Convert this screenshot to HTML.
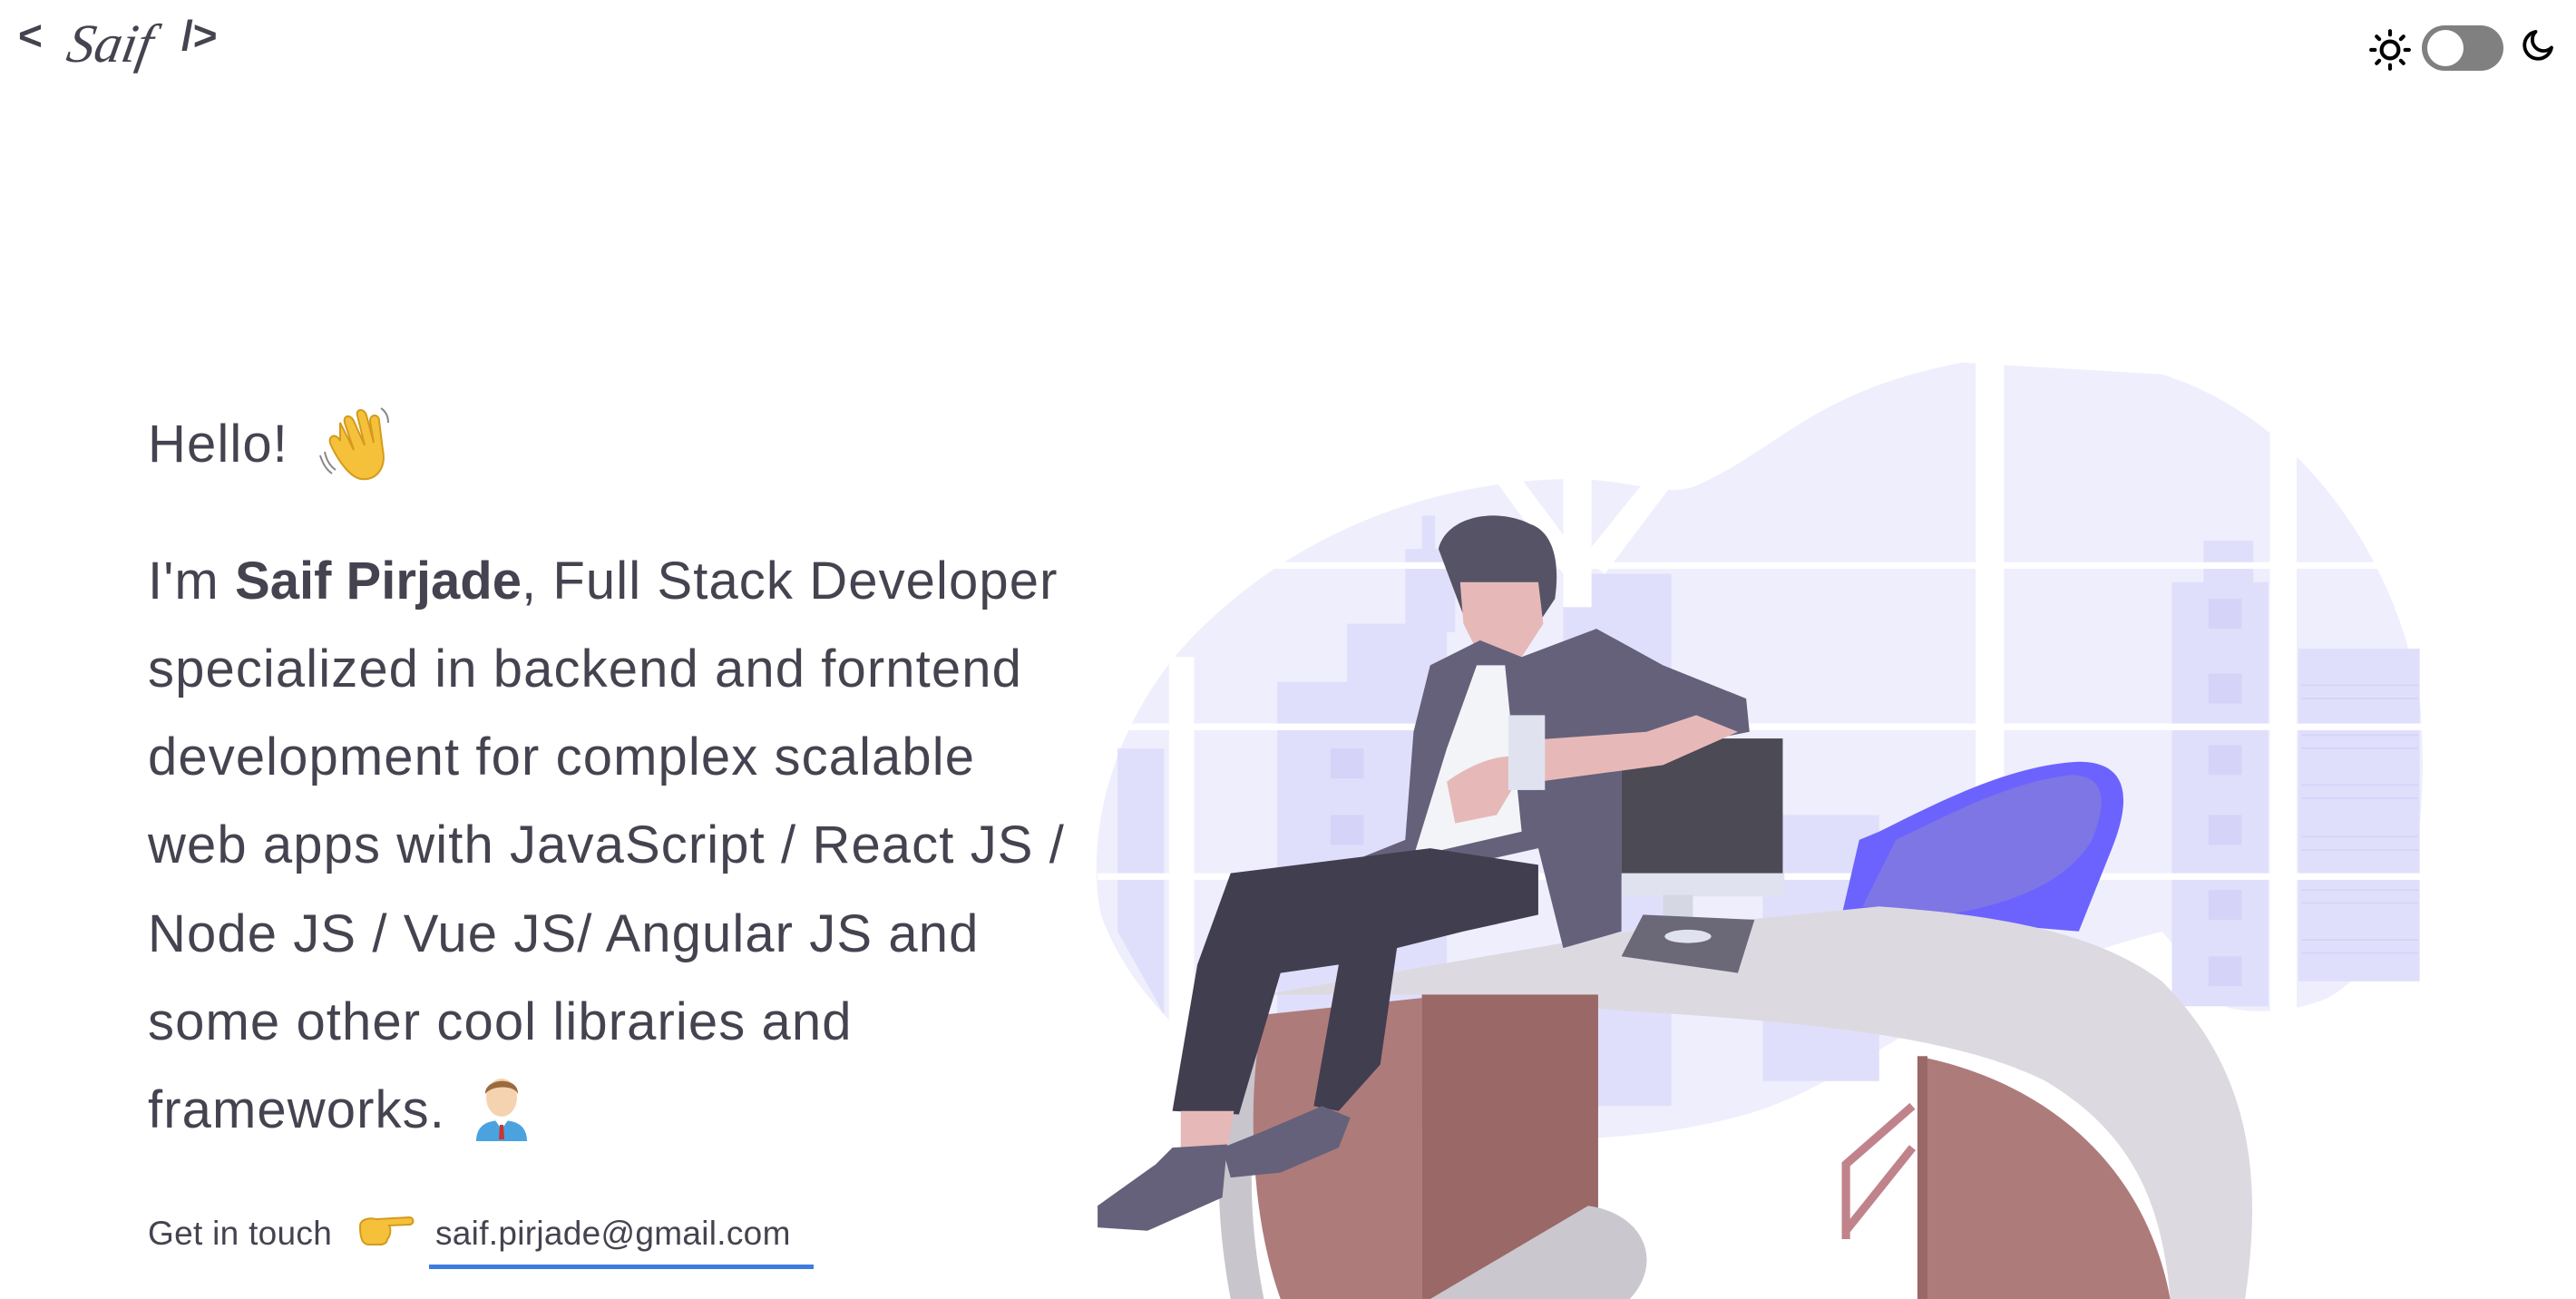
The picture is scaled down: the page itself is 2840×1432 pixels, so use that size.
<!DOCTYPE html>
<html><head><meta charset="utf-8"><style>
html,body{margin:0;padding:0;background:#fff;width:2840px;height:1432px;overflow:hidden;position:relative;font-family:"Liberation Sans",sans-serif;color:#45434f}
.t{position:absolute;left:163px;white-space:nowrap;font-size:58px;line-height:97px;font-weight:300;letter-spacing:1.1px;color:#45434f}
b{font-weight:700;letter-spacing:0px}
svg.ill{position:absolute;left:0;top:0}
</style></head><body>
<svg class="ill" width="2840" height="1432" viewBox="0 0 1549 781">
 <path d="M720 380 C780 320 860 290 940 288 C980 287 1000 300 1020 292 C1070 270 1090 235 1180 218 L1300 225 C1380 250 1440 330 1455 420 C1462 500 1450 570 1400 600 C1380 608 1360 610 1340 606 L1300 560 C1150 600 1120 650 1050 670 C980 690 880 690 800 670 C730 650 680 600 662 550 C652 500 670 430 720 380 Z" fill="#efeefd"/>
 <g fill="#e0dffb">
  <rect x="810" y="375" width="60" height="280"/>
  <rect x="855" y="310" width="8" height="70"/>
  <rect x="845" y="330" width="30" height="50"/>
  <rect x="768" y="410" width="50" height="220"/>
  <rect x="940" y="345" width="65" height="320"/>
  <rect x="1060" y="490" width="70" height="160"/>
  <rect x="1306" y="350" width="58" height="255"/>
  <rect x="1325" y="325" width="30" height="30"/>
  <rect x="1382" y="390" width="73" height="200"/>
  <path d="M672 450 L700 450 L700 610 L672 560Z"/>
 </g>
 <g fill="#d5d3f7">
  <rect x="800" y="450" width="20" height="18"/><rect x="800" y="490" width="20" height="18"/>
  <rect x="1328" y="360" width="20" height="18"/><rect x="1328" y="405" width="20" height="18"/><rect x="1328" y="448" width="20" height="18"/><rect x="1328" y="490" width="20" height="18"/><rect x="1328" y="535" width="20" height="18"/><rect x="1328" y="575" width="20" height="18"/>
 </g>
 <g stroke="#d5d3f7" stroke-width="1" fill="none">
  <path d="M1384 412h70M1384 420h70M1384 442h70M1384 450h70M1384 472h70M1384 480h70M1384 503h70M1384 511h70M1384 535h70M1384 543h70M1384 565h70M1384 573h70"/>
 </g>
 <g fill="#fff">
  <rect x="660" y="338" width="800" height="4"/>
  <rect x="660" y="435" width="800" height="4"/>
  <rect x="660" y="525" width="800" height="4"/>
  <rect x="1188" y="210" width="17" height="400"/>
  <rect x="1365" y="260" width="16" height="350"/>
  <rect x="703" y="395" width="15" height="280"/>
  <rect x="940" y="285" width="17" height="80"/>
  <path d="M900 290 L915 288 L950 335 L940 345Z"/>
  <path d="M990 288 L1005 292 L965 345 L952 335Z"/>
 </g>
 <path d="M1130 500 C1170 480 1210 460 1250 458 C1280 458 1282 480 1270 510 L1250 560 L1108 548 L1118 505 Z" fill="#6c63ff"/>
 <path d="M1140 505 C1175 488 1210 470 1245 466 C1265 466 1268 480 1258 505 C1240 535 1200 545 1170 550 L1120 545Z" fill="#7d76e4"/>
 <path d="M1150 665 L1110 700 L1110 745 M1150 690 L1110 740" stroke="#c0838c" stroke-width="5" fill="none"/>
 <path d="M760 598 L980 560 L1130 545 C1200 550 1260 560 1300 590 C1350 640 1362 700 1350 781 L1305 781 C1300 720 1280 680 1230 650 C1180 625 1100 615 980 608 L860 598 Z" fill="#dcd9e1"/>
 <path d="M760 610 C735 640 725 700 740 781 L760 781 C748 720 750 660 770 620 Z" fill="#c8c5cd"/>
 <path d="M760 610 C752 640 748 720 770 781 L855 781 L855 600 Z" fill="#ae7b7b"/>
 <rect x="855" y="598" width="106" height="183" fill="#996867"/>
 <path d="M955 725 C990 730 1000 760 980 781 L860 781 Z" fill="#cac7ce"/>
 <path d="M1153 635 C1230 650 1290 700 1305 781 L1153 781 Z" fill="#ae7b7b"/>
 <rect x="1153" y="635" width="6" height="146" fill="#9a6867"/>
 <rect x="975" y="444" width="97" height="85" fill="#4b4a55"/>
 <rect x="975" y="525" width="98" height="14" fill="#e0e3ef"/>
 <rect x="1000" y="538" width="18" height="14" fill="#d5d8e3"/>
 <path d="M988 550 L1055 553 L1045 585 L975 575 Z" fill="#6b6878"/>
 <ellipse cx="1015" cy="563" rx="14" ry="4" fill="#e0e3ef"/>
 <path d="M865 330 C870 310 900 305 920 315 C935 320 938 340 935 360 L925 375 L880 370 Z" fill="#575366"/>
 <path d="M878 350 L925 350 L928 375 L915 395 L890 395 L880 375Z" fill="#e6b9b8"/>
 <path d="M860 400 L890 385 L915 395 L960 378 L1000 400 L1050 420 L1052 440 L1000 450 L975 455 L975 560 L940 570 L925 510 L880 520 L820 515 L845 505 L850 440 Z" fill="#65617b"/>
 <path d="M888 400 L905 400 L915 500 L850 515 L870 450 Z" fill="#f3f4f8"/>
 <path d="M920 445 L990 440 L1020 430 L1045 440 L1000 460 L925 470 Z" fill="#e6b9b8"/>
 <path d="M870 470 C890 455 915 450 918 460 L900 490 L875 495 Z" fill="#e6b9b8"/>
 <rect x="907" y="430" width="22" height="45" fill="#e0e3ef"/>
 <path d="M740 525 L860 510 L925 520 L925 550 L880 560 L840 570 L830 640 L805 668 L790 665 L805 580 L770 585 L745 670 L705 668 L720 580 Z" fill="#413e50"/>
 <path d="M710 668 L742 668 L738 690 L710 695 Z" fill="#e6b9b8"/>
 <path d="M705 690 L738 688 L735 720 L690 740 L660 738 L660 725 L695 700 Z" fill="#65617b"/>
 <path d="M795 665 L812 672 L805 690 L770 705 L740 708 L735 690 L760 680 Z" fill="#65617b"/>
</svg>

<div style="position:absolute;left:20px;top:12px;font-size:46px;font-weight:700;color:#45434f;letter-spacing:2px">&lt;</div>
<div style="position:absolute;left:75px;top:14px;font-family:'Liberation Serif',serif;font-style:italic;font-size:60px;color:#45434f;transform:skewX(-10deg)">Saif</div>
<div style="position:absolute;left:200px;top:12px;font-size:46px;font-weight:700;color:#45434f">/&gt;</div>

<svg style="position:absolute;left:2610px;top:30px" width="50" height="50" viewBox="0 0 24 24" fill="none" stroke="#000" stroke-width="2" stroke-linecap="round"><circle cx="12" cy="12" r="4.5"/><path d="M12 2v2M12 20v2M2 12h2M20 12h2M4.9 4.9l1.4 1.4M17.7 17.7l1.4 1.4M4.9 19.1l1.4-1.4M17.7 6.3l1.4-1.4"/></svg>
<div style="position:absolute;left:2670px;top:28px;width:90px;height:50px;border-radius:25px;background:#808080"><div style="position:absolute;left:6px;top:5px;width:40px;height:40px;border-radius:50%;background:#fff"></div></div>
<svg style="position:absolute;left:2778px;top:30px" width="40" height="40" viewBox="0 0 24 24" fill="none" stroke="#000" stroke-width="2.3" stroke-linejoin="round"><path d="M21 13.5A9 9 0 1 1 10.5 3a7 7 0 0 0 10.5 10.5z"/></svg>

<div class="t" style="top:441px">Hello!</div>
<svg style="position:absolute;left:350px;top:446px" width="86" height="84" viewBox="0 0 86 84"><path d="M25 20 L40 50 L30 20 C28 12 36 10 40 18 L52 45 L44 12 C42 4 52 4 54 12 L62 42 L58 18 C58 10 68 10 68 18 L72 50 C76 70 65 84 48 82 C35 80 22 60 15 45 C10 35 20 30 25 40 Z" fill="#f5c13b" stroke="#d49a1d" stroke-width="2"/><path d="M8 52 C10 62 14 68 20 72 M3 56 C6 66 10 72 16 76 M70 4 C76 8 78 14 78 20" stroke="#888" stroke-width="2" fill="none"/></svg>
<div class="t" style="top:592px">I'm <b>Saif Pirjade</b>, Full Stack Developer</div>
<div class="t" style="top:689px">specialized in backend and forntend</div>
<div class="t" style="top:786px">development for complex scalable</div>
<div class="t" style="top:883px">web apps with JavaScript / React JS /</div>
<div class="t" style="top:981px">Node JS / Vue JS/ Angular JS and</div>
<div class="t" style="top:1078px">some other cool libraries and</div>
<div class="t" style="top:1175px">frameworks.</div>
<svg style="position:absolute;left:520px;top:1180px" width="66" height="80" viewBox="0 0 66 80"><path d="M5 78 C5 60 18 55 33 55 C48 55 61 60 61 78Z" fill="#4aa3df"/><path d="M26 55 L33 65 L40 55Z" fill="#fff"/><path d="M31 60 L35 60 L36 76 L30 76Z" fill="#c33"/><ellipse cx="33" cy="30" rx="17" ry="21" fill="#f6d3b0"/><path d="M15 26 C14 8 52 6 51 26 C47 16 22 16 15 26Z" fill="#9b6a3f"/></svg>
<div style="position:absolute;left:163px;top:1335px;font-size:37px;line-height:50px;font-weight:300;letter-spacing:0.3px;color:#45434f">Get in touch</div>
<svg style="position:absolute;left:393px;top:1332px" width="64" height="46" viewBox="0 0 64 46"><path d="M4 20 C4 12 14 10 22 12 L58 10 C64 10 64 18 58 18 L36 19 C38 22 38 30 34 34 C34 38 30 40 26 40 L14 40 C6 40 4 32 4 20Z" fill="#f5c13b" stroke="#d49a1d" stroke-width="2"/></svg>
<div style="position:absolute;left:480px;top:1335px;font-size:37px;line-height:50px;color:#45434f;letter-spacing:0.3px">saif.pirjade@gmail.com</div>
<div style="position:absolute;left:473px;top:1394px;width:424px;height:5px;background:#3f7be0"></div>
</body></html>
